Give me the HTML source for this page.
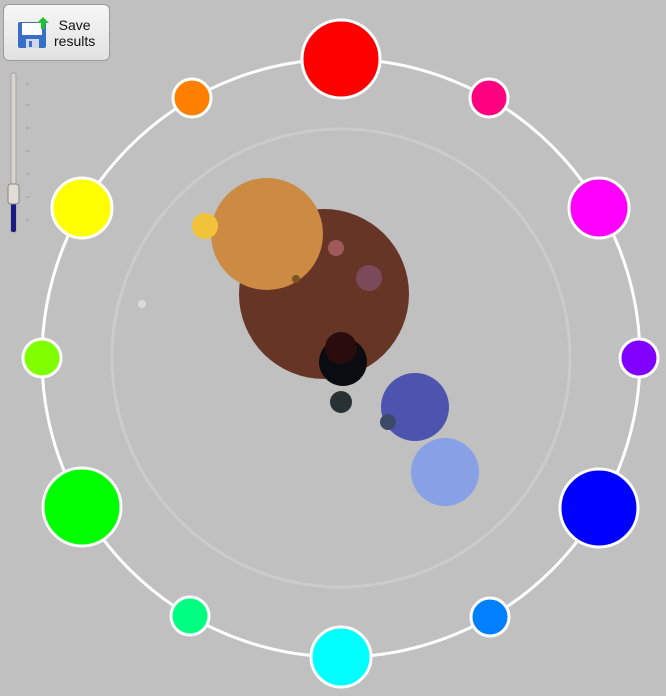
<!DOCTYPE html><html><head><style>
body{margin:0;width:666px;height:696px;background:#c0c0c0;overflow:hidden;position:relative;font-family:"Liberation Sans",sans-serif}
.btn{position:absolute;left:3px;top:4px;width:107px;height:57px;border:1px solid #9a9a9a;border-radius:6px;background:linear-gradient(#f6f6f6,#e2e2e2);box-sizing:border-box}
.btn span{position:absolute;left:50px;top:12px;font-size:14px;line-height:16px;text-align:center;color:#111}
</style></head><body>
<svg width="666" height="696" style="position:absolute;left:0;top:0">
<circle cx="341" cy="358" r="229" fill="none" stroke="#cbcbcb" stroke-width="3"/>
<circle cx="341" cy="358" r="299" fill="none" stroke="#fff" stroke-width="3"/>
<g stroke="#fff" stroke-width="3">
<circle cx="341" cy="59" r="39" fill="#f00"/>
<circle cx="489" cy="98" r="19" fill="#ff0080"/>
<circle cx="599" cy="208" r="30" fill="#f0f"/>
<circle cx="639" cy="358" r="19" fill="#8000ff"/>
<circle cx="599" cy="508" r="39" fill="#00f"/>
<circle cx="490" cy="617" r="19" fill="#0080ff"/>
<circle cx="341" cy="657" r="30" fill="#0ff"/>
<circle cx="190" cy="616" r="19" fill="#00ff80"/>
<circle cx="82" cy="507" r="39" fill="#0f0"/>
<circle cx="42" cy="358" r="19" fill="#80ff00"/>
<circle cx="82" cy="208" r="30" fill="#ff0"/>
<circle cx="192" cy="98" r="19" fill="#ff8000"/>
</g>
<circle cx="324" cy="294" r="85" fill="#673526"/>
<circle cx="267" cy="234" r="56" fill="#cd8a42"/>
<circle cx="205" cy="226" r="13" fill="#f2c33a"/>
<circle cx="336" cy="248" r="8" fill="#a05a5a"/>
<circle cx="369" cy="278" r="13" fill="#7a4a5a"/>
<circle cx="296" cy="279" r="4" fill="#7a5520"/>
<circle cx="142" cy="304" r="4" fill="#dcdcdc"/>
<circle cx="343" cy="362" r="24" fill="#0a0c12"/>
<circle cx="341" cy="348" r="16" fill="#2a0c0c"/>
<circle cx="341" cy="402" r="11" fill="#283234"/>
<circle cx="415" cy="407" r="34" fill="#4d54ad"/>
<circle cx="445" cy="472" r="34" fill="#88a0e6"/>
<circle cx="388" cy="422" r="8" fill="#3c4a6a"/>
<rect x="11" y="73" width="5" height="160" rx="2" fill="#d8d5d0" stroke="#a8a49e"/>
<rect x="11" y="203" width="5" height="29" rx="2" fill="#1a1a80"/>
<rect x="8" y="184" width="11" height="20" rx="3" fill="#e0ddd8" stroke="#8a8680"/>
<g stroke="#999"><line x1="26" y1="84" x2="29" y2="84"/><line x1="26" y1="105" x2="29" y2="105"/><line x1="26" y1="128" x2="29" y2="128"/><line x1="26" y1="151" x2="29" y2="151"/><line x1="26" y1="174" x2="29" y2="174"/><line x1="26" y1="197" x2="29" y2="197"/><line x1="26" y1="220" x2="29" y2="220"/></g>
</svg>
<div class="btn">
<svg width="32" height="32" style="position:absolute;left:13px;top:12px">
<rect x="1" y="5" width="28" height="26" rx="2" fill="#3a6fc8"/>
<rect x="5" y="6" width="20" height="12" fill="#fff"/>
<rect x="9" y="22" width="13" height="9" fill="#cfd8e8"/>
<rect x="12" y="24" width="3" height="6" fill="#3a6fc8"/>
<path d="M20 6 L26 0 L32 6 L28 6 L28 12 L24 12 L24 6Z" fill="#22c030"/>
</svg>
<span>Save<br>results</span></div>
</body></html>
